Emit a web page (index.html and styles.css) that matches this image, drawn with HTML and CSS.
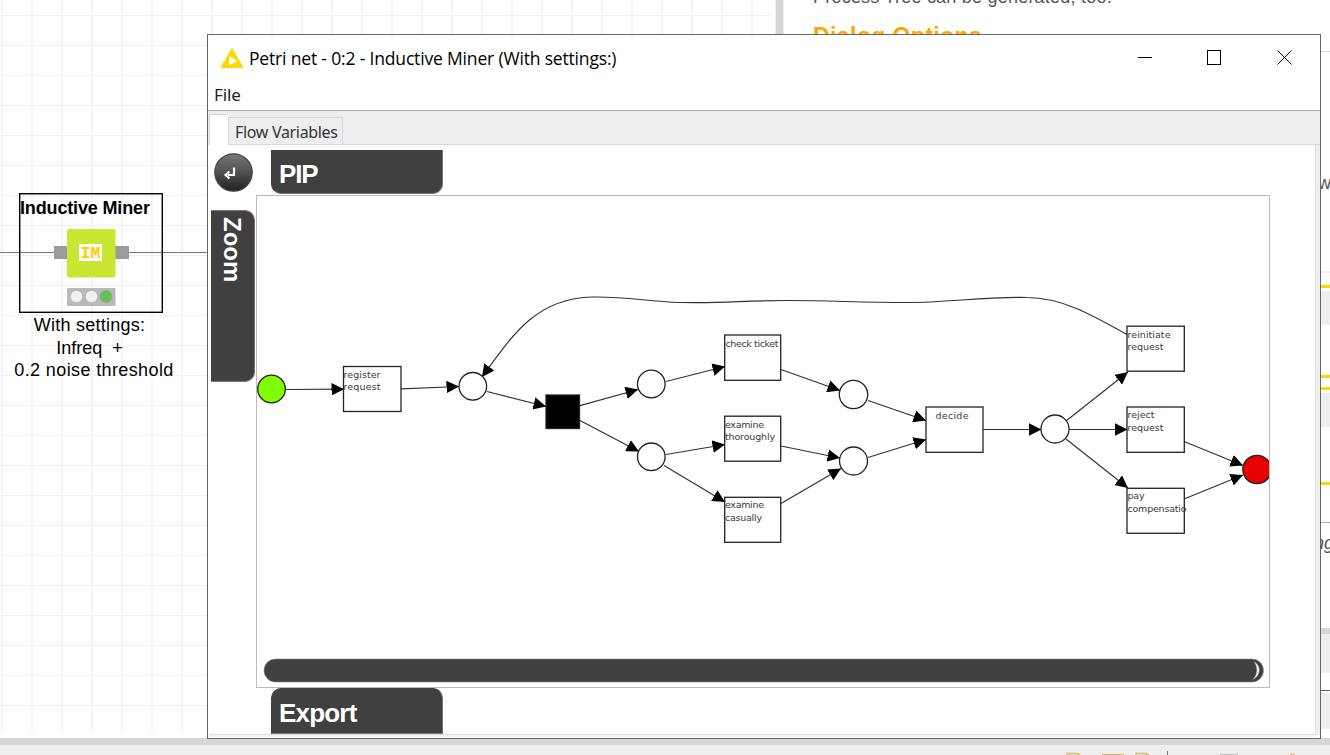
FILE: index.html
```html
<!DOCTYPE html>
<html lang="en">
<head>
<meta charset="utf-8">
<title>Petri net - 0:2 - Inductive Miner</title>
<link rel="stylesheet" href="styles.css">
</head>
<body>
<div class="desktop">
  <div class="workbench">
    <section class="editor">
      <div class="grid-area"></div>
      <svg class="wire" width="207" height="20" viewBox="0 243 207 20"><path d="M0 252.5H54M129 252.5H207" stroke="#777" fill="none"/></svg>
      <div class="node">
        <div class="node-box">
          <div class="node-title">Inductive Miner</div>
          <svg class="node-icon" width="76" height="78" viewBox="53 229 76 78">
            <path d="M54 246h14v13H54zM115 246h14v13h-14z" fill="#9b9b9b"/>
            <rect x="67" y="229" width="48.500" height="48.500" rx="2.500" fill="#c8e632"/>
            <rect x="79" y="244" width="23" height="17" fill="#fff"/>
            <text class="im" x="80.500" y="258" textLength="20" lengthAdjust="spacingAndGlyphs">IM</text>
            <rect x="67" y="288" width="48.500" height="18" rx="1" fill="#b9b9b9"/>
            <circle cx="76.500" cy="296.500" r="5.700" fill="#f2f2f2"/><circle cx="91.500" cy="296.500" r="5.700" fill="#f2f2f2"/><circle cx="106" cy="296.500" r="6.200" fill="#6abf5b"/>
          </svg>
        </div>
        <div class="node-note"><span class="n1">With settings:</span><br><span class="n2">Infreq&nbsp; +</span><br><span class="n3">0.2 noise threshold</span></div>
      </div>
    </section>
    <div class="sash"></div>
    <aside class="description">
      <div class="desc-top">
        <p class="desc-line">Process Tree can be generated, too.</p>
        <h2 class="desc-heading">Dialog Options</h2>
      </div>
      <div class="desc-rule"></div>
      <div class="desc-text"><span>w.</span></div>
      <div class="desc-rule pale"></div>
      <div class="yellow first"></div>
      <div class="desc-block"></div>
      <div class="yellow second"></div>
      <div class="yellow third"></div>
      <div class="desc-block"></div>
      <div class="yellow fourth"></div>
      <div class="grey-rule"></div>
      <div class="desc-text low"><i>ng</i></div>
      <div class="h-sash"></div>
      <div class="console-tab"></div>
      <div class="dark-rule"></div>
      <div class="console-row"></div>
    </aside>
  </div>
  <footer class="taskbar">
    <svg width="300" height="17" viewBox="1030 738 300 17" fill="none">
      <path d="M1067 755V753.500H1077L1080 755M1136 755V753.500H1146L1149 755" stroke="#d4bd72" stroke-width="1.500"/>
      <path d="M1102 754.500H1124" stroke="#c9b77a"/><path d="M1167.500 751V755" stroke="#777"/><path d="M1220 754.500H1238" stroke="#bbb"/><path d="M1290 755L1292.500 753.500L1295 755" stroke="#d4ae50"/>
    </svg>
  </footer>

  <main class="window">
    <header class="titlebar">
      <svg class="logo" width="24" height="22" viewBox="0 0 24 22"><path d="M12 0.500L23.700 21H0.300Z" fill="#ffd800"/><path d="M9 9L17.500 14L9 18.500Z" fill="#fff"/></svg>
      <h1 class="title">Petri net - 0:2 - Inductive Miner (With settings:)</h1>
      <svg class="controls" width="156" height="18" viewBox="0 0 156 18" fill="none" stroke="#000" shape-rendering="crispEdges"><path d="M0 8.500H14"/><rect x="69.500" y="1.500" width="13" height="14"/><path d="M139.500 1.500L153.500 15.500M153.500 1.500L139.500 15.500" shape-rendering="auto"/></svg>
    </header>
    <nav class="menubar"><span>File</span></nav>
    <div class="tabs"><div class="tab active"></div><div class="tab">Flow Variables</div></div>
    <section class="view">
      <div class="corner">
        <svg width="42" height="42" viewBox="213 151 42 42">
          <defs><linearGradient id="ball" x1="0" y1="0" x2="0" y2="1"><stop offset="0" stop-color="#777"/><stop offset=".5" stop-color="#505050"/><stop offset="1" stop-color="#202020"/></linearGradient></defs>
          <circle cx="233.500" cy="172.500" r="18.700" fill="url(#ball)" stroke="#444" stroke-width="1.200"/>
          <path d="M234 167.500V175H228M229.500 171.500L225.500 175L229.500 178.500" fill="none" stroke="#fff" stroke-width="2.200"/>
        </svg>
      </div>
      <div class="top-slot"><div class="pip">PIP</div></div>
      <div class="left-slot"><div class="zoom"><span>Zoom</span></div></div>
      <div class="viewport">
        <svg width="1012" height="491" viewBox="257 196 1012 491" class="net">
          <defs><marker id="arrow" viewBox="0 0 12 12" refX="12" refY="6" markerWidth="12.500" markerHeight="12.500" markerUnits="userSpaceOnUse" orient="auto"><path d="M0 0L12 6L0 12Z" fill="#000"/></marker></defs>
          <g class="arcs">
            <path d="M286 389.500L344 389.200"/><path d="M401 388.800L459 386.500"/><path d="M487 391.500L546 406.500"/>
            <path d="M580 405.700L638 389.500"/><path d="M580 420.500L639 451.500"/>
            <path d="M666 381.500L725 366.500"/><path d="M666 454.500L725 444.500"/><path d="M664 465.500L725 502"/>
            <path d="M781 369.500L840 390.500"/><path d="M781 446L840 458"/><path d="M781 503.500L841 468.500"/>
            <path d="M868 400.500L926 420.500"/><path d="M868 457.500L926 439.500"/>
            <path d="M983 429.500H1041.500"/><path d="M1066 421L1128 372"/><path d="M1069 429.500H1127.500"/><path d="M1066 439L1128 488"/>
            <path d="M1184 441.500L1243 465.500"/><path d="M1184 499L1243 475"/>
            <path d="M1127 334.500C1093 315.500 1062 297.500 1027 297.500C985 296.500 948 302.500 908 302.500C855 302.500 835 300.500 785 300.500C742 300.500 725 303.500 680 302.500C646 301.500 629 296.500 592 297C538 298.500 515 331 482 377"/>
          </g>
          <g class="nodes">
            <circle cx="271.500" cy="389" r="13.800" fill="#80ff00"/><circle cx="472.800" cy="386.300" r="13.800"/><circle cx="651.300" cy="384" r="13.800"/><circle cx="651.300" cy="456.800" r="13.800"/><circle cx="853.500" cy="394.500" r="14.200"/><circle cx="853.500" cy="461" r="14"/><circle cx="1055" cy="429" r="14"/><circle cx="1257" cy="469.500" r="14.200" fill="#e60000"/>
            <rect x="343.500" y="366.500" width="57.500" height="45"/><rect x="546" y="395" width="33.500" height="33.500" fill="#000"/>
            <rect x="724.700" y="335" width="56" height="45.300"/><rect x="724.700" y="416.200" width="56" height="45"/><rect x="724.700" y="497.300" width="56" height="45"/>
            <rect x="926" y="407" width="57" height="45.300"/><rect x="1127" y="326.200" width="57.300" height="45"/><rect x="1127" y="407" width="57.300" height="45.300"/><rect x="1127" y="488.300" width="57.300" height="45"/>
          </g>
          <g class="labels">
            <text x="343.500" y="378" textLength="37">register</text><text x="343.500" y="390" textLength="37">request</text>
            <text x="725.500" y="346.500" textLength="53">check ticket</text>
            <text x="725" y="427.500" textLength="39">examine</text><text x="725" y="439.500" textLength="50">thoroughly</text>
            <text x="725" y="507.500" textLength="39">examine</text><text x="725" y="520.500" textLength="37">casually</text>
            <text x="935.500" y="418.500" textLength="33">decide</text>
            <text x="1127.500" y="337.500" textLength="43">reinitiate</text><text x="1127.500" y="349.500" textLength="36">request</text>
            <text x="1127.500" y="417.500" textLength="27">reject</text><text x="1127.500" y="430.500" textLength="36">request</text>
            <text x="1127.500" y="498.500" textLength="17">pay</text><text x="1127.500" y="511.500" textLength="59">compensatio</text>
          </g>
          <rect x="264" y="659" width="999.500" height="23" rx="11.500" fill="#404040" stroke="#888" stroke-width=".6"/>
          <path d="M1254.500 662C1261 666 1261 675 1253 679.500C1258 674 1258 668 1254.500 662Z" fill="#fff" stroke="#bbb" stroke-width=".5"/>
        </svg>
      </div>
      <div class="bottom-slot"><div class="export">Export</div></div>
    </section>
  </main>
</div>
</body>
</html>
```
FILE: styles.css
```css
* { box-sizing: border-box; }
body { margin: 0; overflow: hidden; background: #fff; font-family: "Liberation Sans", Arial, sans-serif; color: #000; }
.desktop { position: relative; width: 1330px; height: 755px; overflow: hidden; }
.workbench { display: flex; height: 738px; }
.editor { position: relative; width: 775px; flex: none; }
.grid-area {
  width: 770px; height: 730px;
  background:
    linear-gradient(90deg, #f4f4f4 2px, transparent 2px) 1px 0 / 30px 30px,
    linear-gradient(#f0f0f0 1px, transparent 1px) 0 15px / 30px 30px;
}
.wire { position: absolute; left: 0; top: 243px; }
.node { position: absolute; left: 4px; top: 193px; width: 180px; display: flex; flex-direction: column; align-items: center; }
.node-box { width: 144px; height: 120px; margin-right: 6px; border: 1px solid #000; box-shadow: inset 0 0 0 .5px #333; display: flex; flex-direction: column; }
.node-title { height: 35px; padding-top: 4px; font-size: 18px; line-height: 20px; font-weight: bold; letter-spacing: -.15px; white-space: nowrap; }
.node-icon { margin-left: 33px; }
.im { font: bold 17px "Liberation Mono", monospace; fill: #fc0; }
.node-note { font-size: 18px; line-height: 22.500px; text-align: center; white-space: nowrap; padding-top: 1px; }
.n1 { margin-right: 9px; letter-spacing: .25px; }
.n2 { margin-right: 9px; }
.n3 { letter-spacing: .38px; }
.sash { width: 9px; background: #d7d7d7; border-right: 1px solid #eee; border-left: 1px solid #eee; }
.description { flex: 1; display: flex; flex-direction: column; overflow: hidden; }
.desc-top { height: 51px; padding-left: 29px; flex: none; }
.desc-line { margin: -13px 0 0; font-size: 18px; line-height: 20px; letter-spacing: .22px; color: #555; white-space: nowrap; }
.desc-heading { margin: 16px 0 0; font-size: 23px; line-height: 26px; letter-spacing: .4px; color: #ffa500; }
.desc-rule { height: 1px; flex: none; background: #ddd; }
.desc-text { height: 219px; flex: none; padding: 120px 0 0 534px; font-size: 18px; line-height: 22px; color: #555; }
.desc-rule.pale { height: 2px; background: #eee; }
.yellow { height: 3px; flex: none; background: #ffd800; }
.first { margin-top: 12px; }
.second { margin-top: 50px; }
.third { margin-top: 9px; }
.fourth { margin-top: 55px; }
.desc-block { height: 34px; flex: none; margin-top: 3px; background: #eee; }
.desc-block + .second { margin-top: 50px; }
.grey-rule { height: 1px; flex: none; margin-top: 37px; background: #aaa; }
.desc-text.low { height: 105px; padding: 9px 0 0 530px; }
.h-sash { height: 6px; flex: none; background: #d7d7d7; }
.console-tab { height: 39px; flex: none; background: #eee; }
.dark-rule { height: 1px; flex: none; margin-top: 17px; background: #666; }
.console-row { height: 36px; flex: none; margin-top: 2px; background: #eeeff0; }
.taskbar { height: 17px; display: flex; justify-content: flex-end; background: linear-gradient(#d7d7d7 7px, #efefef 7px); }
.window { position: absolute; left: 207px; top: 34px; width: 1114px; height: 705px; border: 1px solid #666; background: #fff; display: flex; flex-direction: column; }
.titlebar { height: 46px; flex: none; display: flex; align-items: center; padding-left: 12px; }
.title { margin: 0 0 0 5px; font: 17.500px/24px "Open Sans", "Noto Sans", sans-serif; letter-spacing: -.17px; white-space: nowrap; }
.controls { margin-left: auto; margin-right: 26px; }
.menubar { height: 30px; flex: none; padding: 2px 0 0 6px; border-bottom: 1px solid #aaa; font: 17px/24px "Noto Sans", sans-serif; letter-spacing: -.1px; color: #222; }
.tabs { height: 34px; flex: none; display: flex; align-items: flex-end; background: #eee; padding-left: 1px; border-bottom: 1px solid #d9d9d9; }
.tab { height: 27px; border: 1px solid #d9d9d9; border-bottom: 0; padding: 0 4px 0 6px; width: 115px; font: 16px/29px "Noto Sans", sans-serif; letter-spacing: -.32px; color: #333; white-space: nowrap; }
.tab.active { width: 19px; height: 31px; margin-bottom: -1px; background: #fff; border-right: 0; }
.view { flex: 1; margin: 0 4px 3px 1px; border-right: 1px solid #ddd; border-bottom: 1px solid #ddd; box-shadow: 4px 0 #eee, 0 2px #f4f4f4; display: grid; grid-template-columns: 47px 1014px; grid-template-rows: 50px 493px 46px; }
.corner { padding: 6px 0 0 4px; }
.top-slot, .bottom-slot { grid-column: 2; padding-left: 15px; }
.top-slot { padding-top: 5px; }
.pip, .export { width: 172px; padding-left: 7px; background: #404040; color: #fff; font-size: 26px; font-weight: bold; border: 1px solid #777; border-top-color: #404040; border-left-color: #404040; }
.pip { height: 44px; line-height: 46px; border-radius: 0 0 10px 10px; letter-spacing: -1.200px; }
.export { height: 46px; line-height: 48px; border-radius: 10px 10px 0 0; letter-spacing: -.8px; }
.left-slot { padding: 15px 0 0 2px; }
.zoom { width: 44px; height: 172px; border: 1px solid #777; border-left-color: #404040; border-radius: 0 10px 10px 0; background: #404040; color: #fff; writing-mode: vertical-rl; font: bold 24px/35px "Liberation Sans", sans-serif; padding: 6px 4px 0 0; letter-spacing: 0; }
.viewport { border: 1px solid #bbb; overflow: hidden; }
.net { display: block; }
.arcs { fill: none; stroke: #333; stroke-width: 1.200; }
.arcs path { marker-end: url(#arrow); }
.nodes { fill: #fff; stroke: #222; stroke-width: 1.300; }
.labels { font: 9.500px "DejaVu Sans", sans-serif; fill: #3a3a44; }
```
